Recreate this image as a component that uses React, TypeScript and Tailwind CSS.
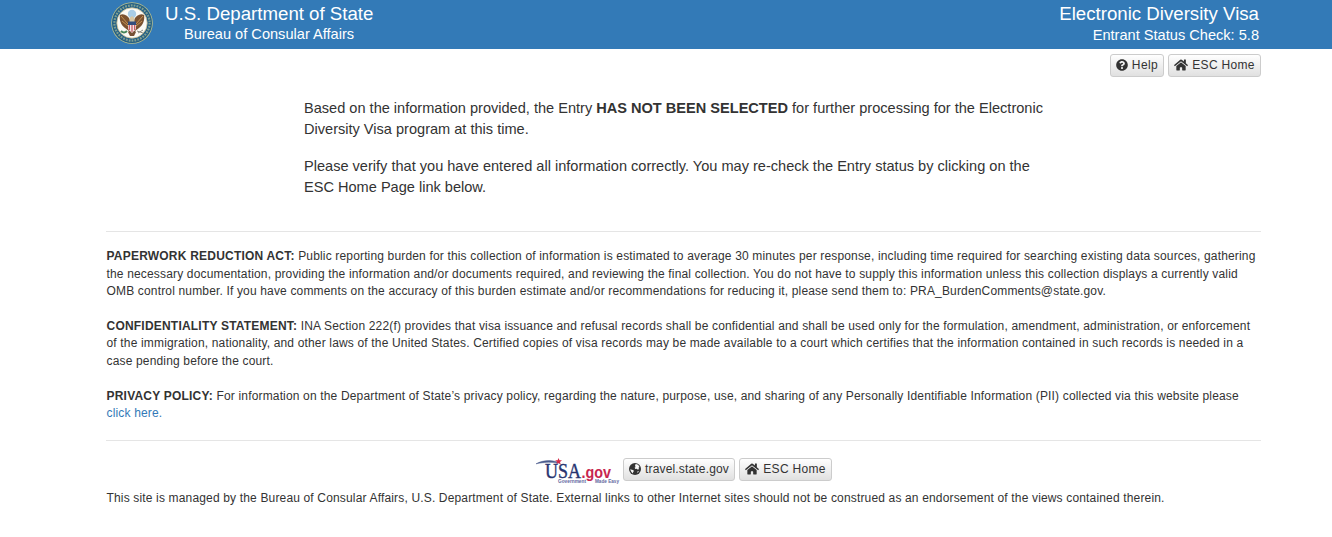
import React from "react";
import { FaHome, FaQuestionCircle } from "react-icons/fa";

function Seal() {
  return (
    <svg viewBox="0 0 42 42" className="h-[42px] w-[42px] shrink-0" aria-label="Department of State seal">
      <circle cx="21" cy="21" r="20.8" fill="#b9c08c" />
      <circle cx="21" cy="21" r="20" fill="#235f85" />
      <circle cx="21" cy="21" r="17.6" fill="none" stroke="#7f9f92" strokeWidth="2.2" strokeDasharray="1.8 1.1" />
      <circle cx="21" cy="21" r="15.2" fill="#fbfaf5" stroke="#c5b98a" strokeWidth="0.8" />
      <circle cx="21" cy="12" r="4.2" fill="#a9cde6" />
      <path d="M19 18C17 13 12 11 9 13c-1 5 1 10 5 13l4 3 2-6zM23 18c2-5 7-7 10-5 1 5-1 10-5 13l-4 3-2-6z" fill="#7b5230" />
      <path d="M10 14l7 8M11 19l6 5M32 14l-7 8M31 19l-6 5" stroke="#c59252" strokeWidth="1" />
      <path d="M18.5 16l2.5-2 2.5 2v4h-5z" fill="#d8c7a4" />
      <path d="M17 30l4-4 4 4-2 4h-4z" fill="#765034" />
      <path d="M17 20h8v7l-4 4-4-4z" fill="#f5e4e4" />
      <path d="M18.3 22v6M21 22v8M23.7 22v6" stroke="#bf4850" strokeWidth="1.1" />
      <path d="M17 19.5h8V23h-8z" fill="#334d7c" />
      <path d="M10 29q3 3 6 0" stroke="#47865a" strokeWidth="2" fill="none" />
      <path d="M26 29l6 2M27 31l5-3" stroke="#8d8e83" strokeWidth="1" />
    </svg>
  );
}

function Globe() {
  return (
    <svg viewBox="0 0 12 12" className="h-3 w-3 shrink-0" aria-hidden="true">
      <circle cx="6" cy="6" r="6" fill="#333" />
      <path d="M6.6 1.1c1.7.2 3.2 1.2 3.9 2.8l-1 .8.5 1.4-1.2.6-.9-1-1.5.3-.8-1.2 1.1-.9-.7-1z" fill="#fafafa" />
      <path d="M1.4 6.1l1.3.7 1.5.3.7 1-.8 1.1-.3 1.2C2.5 9.6 1.4 8.1 1.4 6.1z" fill="#f5f5f5" />
      <path d="M8.6 8.3l1.3-.4-.9 1.5-.8.4z" fill="#f5f5f5" />
    </svg>
  );
}

function UsaGov() {
  return (
    <svg viewBox="0 0 84 26" className="h-[26px] w-[84px] shrink-0" aria-label="USA.gov">
      <path d="M0 5.8C8 1.6 17 1.6 24 5.2 16 3.8 9 4 0 5.8z" fill="#4a5a8c" stroke="#4a5a8c" strokeWidth="0.5" />
      <path d="M22.5 0l1 2.2 2.5.1-2 1.6.7 2.4-2.2-1.4-2.1 1.4.7-2.4-2-1.6 2.5-.1z" fill="#d42a49" />
      <text x="9" y="20" fontFamily="Liberation Serif, serif" fontSize="21" fill="#27346f" stroke="#27346f" strokeWidth="0.4" textLength="36" lengthAdjust="spacingAndGlyphs">USA</text>
      <text x="45.5" y="20" fontFamily="Liberation Sans, sans-serif" fontWeight="bold" fontSize="16" fill="#c72650" textLength="29.5" lengthAdjust="spacingAndGlyphs">.gov</text>
      <text x="22" y="24.5" fontFamily="Liberation Sans, sans-serif" fontWeight="bold" fontSize="5" fill="#6468a0" textLength="28" lengthAdjust="spacingAndGlyphs">Government</text>
      <text x="59" y="24.5" fontFamily="Liberation Sans, sans-serif" fontWeight="bold" fontSize="5" fill="#6468a0" textLength="24" lengthAdjust="spacingAndGlyphs">Made Easy</text>
    </svg>
  );
}

function Button({ icon, className, children }: { icon: React.ReactNode; className: string; children: React.ReactNode }) {
  return (
    <button className={`flex h-[23px] shrink-0 items-center justify-center gap-1 whitespace-nowrap rounded-[3px] border border-[#ccc] bg-linear-to-b from-white to-[#e0e0e0] pb-px text-[12px] leading-[18px] text-[#333] ${className}`}>
      {icon}
      <span>{children}</span>
    </button>
  );
}

function Line({ children }: { children: React.ReactNode }) {
  return <span className="block whitespace-nowrap">{children}</span>;
}

export default function App() {
  return (
    <div className="h-[537px] w-full overflow-hidden bg-white font-['Liberation_Sans',Arial,sans-serif] text-[#333]">
      <header className="h-[49px] bg-[#337ab7] text-white">
        <div className="ml-[111px] flex w-[1148px] justify-between">
          <div className="flex pt-[2px]">
            <Seal />
            <div className="ml-3 whitespace-nowrap">
              <div className="pt-px text-[18.67px] leading-[22px]">U.S. Department of State</div>
              <div className="ml-[19px] text-[14.6px] leading-[18px]">Bureau of Consular Affairs</div>
            </div>
          </div>
          <div className="whitespace-nowrap pt-[3px] text-right">
            <div className="text-[18.67px] leading-[22px]">Electronic Diversity Visa</div>
            <div className="text-[14.6px] leading-[20px]">Entrant Status Check: 5.8</div>
          </div>
        </div>
      </header>
      <main className="ml-[106px] w-[1155px]">
        <div className="flex justify-end gap-1 pt-[5px]">
          <Button className="w-[54px] tracking-[0.4px]" icon={<FaQuestionCircle size={12} />}>Help</Button>
          <Button className="w-[93px] tracking-[0.3px]" icon={<FaHome size={14} />}>ESC Home</Button>
        </div>
        <section className="ml-[198px] pt-[21px] text-[14.57px] leading-[21px]">
          <p>
            <Line>Based on the information provided, the Entry <b>HAS NOT BEEN SELECTED</b> for further processing for the Electronic</Line>
            <Line>Diversity Visa program at this time.</Line>
          </p>
          <p className="mt-4">
            <Line>Please verify that you have entered all information correctly. You may re-check the Entry status by clicking on the</Line>
            <Line>ESC Home Page link below.</Line>
          </p>
        </section>
        <section className="mt-[33px] h-[210px] border-y border-[#e5e5e5] pt-4 pl-[0.5px] text-[12px] leading-[17.6px] tracking-[0.162px] [&_b]:tracking-[0.21px]">
          <p>
            <Line><b>PAPERWORK REDUCTION ACT:</b> Public reporting burden for this collection of information is estimated to average 30 minutes per response, including time required for searching existing data sources, gathering</Line>
            <Line>the necessary documentation, providing the information and/or documents required, and reviewing the final collection. You do not have to supply this information unless this collection displays a currently valid</Line>
            <Line>OMB control number. If you have comments on the accuracy of this burden estimate and/or recommendations for reducing it, please send them to: PRA_BurdenComments@state.gov.</Line>
          </p>
          <p className="mt-[17px]">
            <Line><b>CONFIDENTIALITY STATEMENT:</b> INA Section 222(f) provides that visa issuance and refusal records shall be confidential and shall be used only for the formulation, amendment, administration, or enforcement</Line>
            <Line>of the immigration, nationality, and other laws of the United States. Certified copies of visa records may be made available to a court which certifies that the information contained in such records is needed in a</Line>
            <Line>case pending before the court.</Line>
          </p>
          <p className="mt-[17px]">
            <Line><b>PRIVACY POLICY:</b> For information on the Department of State’s privacy policy, regarding the nature, purpose, use, and sharing of any Personally Identifiable Information (PII) collected via this website please</Line>
            <Line><a className="text-[#337ab7]">click here.</a></Line>
          </p>
        </section>
        <footer>
          <div className="ml-[430px] flex items-start gap-1 pt-[17px]">
            <div className="-mr-[1px]"><UsaGov /></div>
            <Button className="w-[112px] tracking-[0.16px]" icon={<Globe />}>travel.state.gov</Button>
            <Button className="w-[93px] tracking-[0.3px]" icon={<FaHome size={14} />}>ESC Home</Button>
          </div>
          <p className="mt-[5px] whitespace-nowrap pl-[0.5px] text-[12px] leading-[18px] tracking-[0.16px]">This site is managed by the Bureau of Consular Affairs, U.S. Department of State. External links to other Internet sites should not be construed as an endorsement of the views contained therein.</p>
        </footer>
      </main>
    </div>
  );
}
